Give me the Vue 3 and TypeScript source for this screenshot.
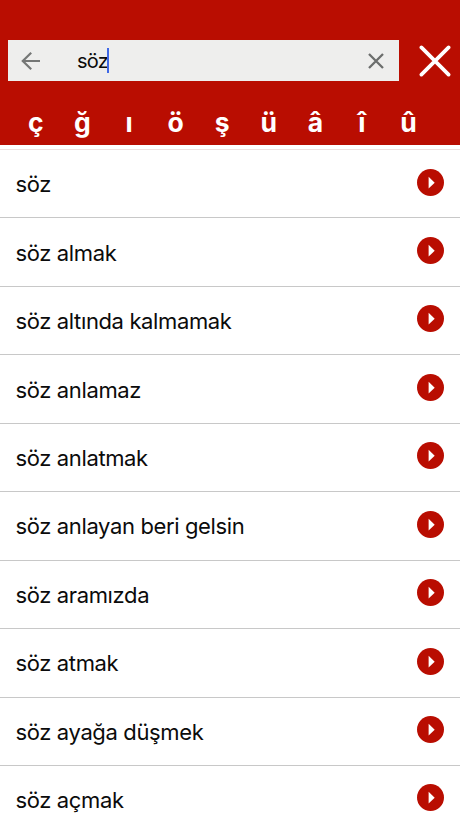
<script setup lang="ts">
import { ref } from 'vue'

const query = ref<string>('söz')
const letters: string[] = ['ç', 'ğ', 'ı', 'ö', 'ş', 'ü', 'â', 'î', 'û']
const results: string[] = [
  'söz',
  'söz almak',
  'söz altında kalmamak',
  'söz anlamaz',
  'söz anlatmak',
  'söz anlayan beri gelsin',
  'söz aramızda',
  'söz atmak',
  'söz ayağa düşmek',
  'söz açmak',
]
</script>

<template>
  <main class="screen">
    <header class="header">
      <div class="search-row">
        <div class="search-box">
          <svg class="back" viewBox="0 0 20 20" aria-hidden="true">
            <path d="M19 10H1.6M10.2 1.8L1.8 10L10.2 18.2" />
          </svg>
          <div class="field"><span class="query">{{ query }}</span><span class="caret"></span></div>
          <svg class="clear" viewBox="0 0 16 16" aria-hidden="true">
            <path d="M1 1L15 15M15 1L1 15" />
          </svg>
        </div>
        <svg class="close" viewBox="0 0 32 32" aria-hidden="true">
          <path d="M2.4 2.4L29.6 29.6M29.6 2.4L2.4 29.6" />
        </svg>
      </div>
      <nav class="letters">
        <span v-for="letter in letters" :key="letter" class="letter">{{ letter }}</span>
      </nav>
    </header>
    <ul class="results">
      <li v-for="item in results" :key="item" class="result">
        <span class="word">{{ item }}</span>
        <svg class="go" viewBox="0 0 27 27" aria-hidden="true">
          <circle cx="13.5" cy="13.5" r="13.5" fill="#b90d01" />
          <path d="M11.6 7.8L17.7 13.7L11.6 19.6Z" fill="#fff" />
        </svg>
      </li>
    </ul>
  </main>
</template>

<style>
body {
  margin: 0;
  overflow: hidden;
}
</style>

<style scoped>
.screen {
  width: 460px;
  height: 818px;
  overflow: hidden;
  background: #fff;
  font-family: Inter, "Liberation Sans", sans-serif;
  color: #0b0b0b;
}
.header {
  box-sizing: border-box;
  height: 145px;
  padding-top: 40px;
  background: #b90d01;
}
.search-row {
  display: flex;
  align-items: center;
  height: 41px;
  padding-left: 8px;
}
.search-box {
  box-sizing: border-box;
  display: flex;
  align-items: center;
  width: 391px;
  height: 41px;
  padding: 0 15px 0 13px;
  background: #eeeeed;
}
.back {
  width: 20px;
  height: 20px;
  fill: none;
  stroke: #757776;
  stroke-width: 2.2;
}
.field {
  display: flex;
  flex: 1;
  align-items: center;
  margin-left: 36px;
}
.query {
  font-size: 20px;
  line-height: 26px;
  letter-spacing: -0.7px;
}
.caret {
  width: 2px;
  height: 25px;
  margin-left: -1px;
  background: #3f68e6;
}
.clear {
  width: 16px;
  height: 16px;
  fill: none;
  stroke: #6c6e6d;
  stroke-width: 2.3;
}
.close {
  width: 32px;
  height: 32px;
  margin-left: 20px;
  fill: none;
  stroke: #fff;
  stroke-width: 3.7;
  stroke-linecap: round;
}
.letters {
  display: flex;
  padding-left: 12.5px;
  margin-top: 23px;
}
.letter {
  width: 46.6px;
  color: #fff;
  font-size: 26.5px;
  font-weight: 700;
  line-height: 36px;
  text-align: center;
}
.results {
  margin: 4px 0 0;
  padding: 0;
  border-top: 1px solid #eee0de;
  list-style: none;
}
.result {
  box-sizing: border-box;
  display: flex;
  align-items: center;
  justify-content: space-between;
  height: 68.45px;
  padding: 0 16.4px 0 15.5px;
  border-bottom: 1px solid #c8c8c8;
}
.word {
  padding-top: 1px;
  font-size: 22px;
  line-height: 30px;
  letter-spacing: -0.37px;
  white-space: nowrap;
}
.go {
  width: 27px;
  height: 27px;
  margin-bottom: 3.4px;
}
</style>
